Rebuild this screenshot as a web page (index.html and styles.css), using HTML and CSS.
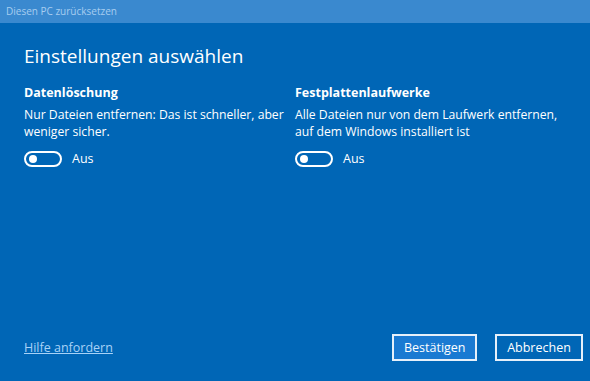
FILE: index.html
```html
<!DOCTYPE html>
<html lang="de">
<head>
<meta charset="utf-8">
<title>Diesen PC zurücksetzen</title>
<link rel="stylesheet" href="styles.css">
</head>
<body>
<div class="window">
  <div class="titlebar">Diesen PC zurücksetzen</div>
  <div class="content">
    <h1 class="heading">Einstellungen auswählen</h1>
    <div class="columns">
      <div class="col">
        <div class="col-title">Datenlöschung</div>
        <div class="col-desc">Nur Dateien entfernen: Das ist schneller, aber weniger sicher.</div>
        <div class="toggle-row"><span class="toggle"><span class="knob"></span></span><span class="toggle-label">Aus</span></div>
      </div>
      <div class="col">
        <div class="col-title">Festplattenlaufwerke</div>
        <div class="col-desc">Alle Dateien nur von dem Laufwerk entfernen, auf dem Windows installiert ist</div>
        <div class="toggle-row"><span class="toggle"><span class="knob"></span></span><span class="toggle-label">Aus</span></div>
      </div>
    </div>
    <div class="footer">
      <a class="help" href="#">Hilfe anfordern</a>
      <div class="buttons">
        <button class="btn btn-primary">Bestätigen</button>
        <button class="btn">Abbrechen</button>
      </div>
    </div>
  </div>
</div>
</body>
</html>
```
FILE: styles.css
```css
html, body {
  margin: 0;
  padding: 0;
  width: 590px;
  height: 381px;
  overflow: hidden;
  background: #0066b6;
}
.window {
  width: 590px;
  height: 381px;
  display: flex;
  flex-direction: column;
  font-family: "Open Sans", "Noto Sans", sans-serif;
  color: #ffffff;
}
.titlebar {
  height: 23px;
  background: #3a89cf;
  color: #a7cdef;
  font-size: 10px;
  line-height: 23px;
  padding-left: 6px;
  box-sizing: border-box;
}
.content {
  flex: 1;
  display: flex;
  flex-direction: column;
  padding: 20px 7px 20px 24px;
}
.heading {
  margin: 0;
  font-weight: 400;
  font-size: 19px;
  line-height: 26px;
  color: #ffffff;
}
.columns {
  display: grid;
  grid-template-columns: 271px 1fr;
  margin-top: 15px;
}
.col-title {
  font-weight: 700;
  font-size: 12.5px;
  line-height: 18px;
}
.col-desc {
  margin-top: 5px;
  font-size: 12.2px;
  line-height: 16.5px;
  max-width: 268px;
}
.toggle-row {
  display: flex;
  align-items: center;
  gap: 10px;
  margin-top: 10px;
}
.toggle {
  width: 38px;
  height: 16px;
  border: 2px solid #ffffff;
  border-radius: 10px;
  box-sizing: border-box;
  display: flex;
  align-items: center;
  padding-left: 3px;
}
.knob {
  width: 8px;
  height: 8px;
  border-radius: 50%;
  background: #ffffff;
}
.toggle-label {
  font-size: 12.5px;
}
.footer {
  margin-top: auto;
  display: flex;
  align-items: center;
  justify-content: space-between;
}
.help {
  color: #a8d2f7;
  font-size: 12.5px;
  text-decoration: underline;
}
.buttons {
  display: flex;
  gap: 18px;
}
.btn {
  height: 27px;
  border: 2px solid #e6f0fa;
  background: #0066b6;
  color: #ffffff;
  font-family: "Open Sans", "Noto Sans", sans-serif;
  font-size: 12.5px;
  padding: 0 10px;
  box-sizing: border-box;
}
.btn-primary {
  background: #1a7ad2;
  width: 85px;
}
.btn:not(.btn-primary) {
  width: 88px;
}
```
